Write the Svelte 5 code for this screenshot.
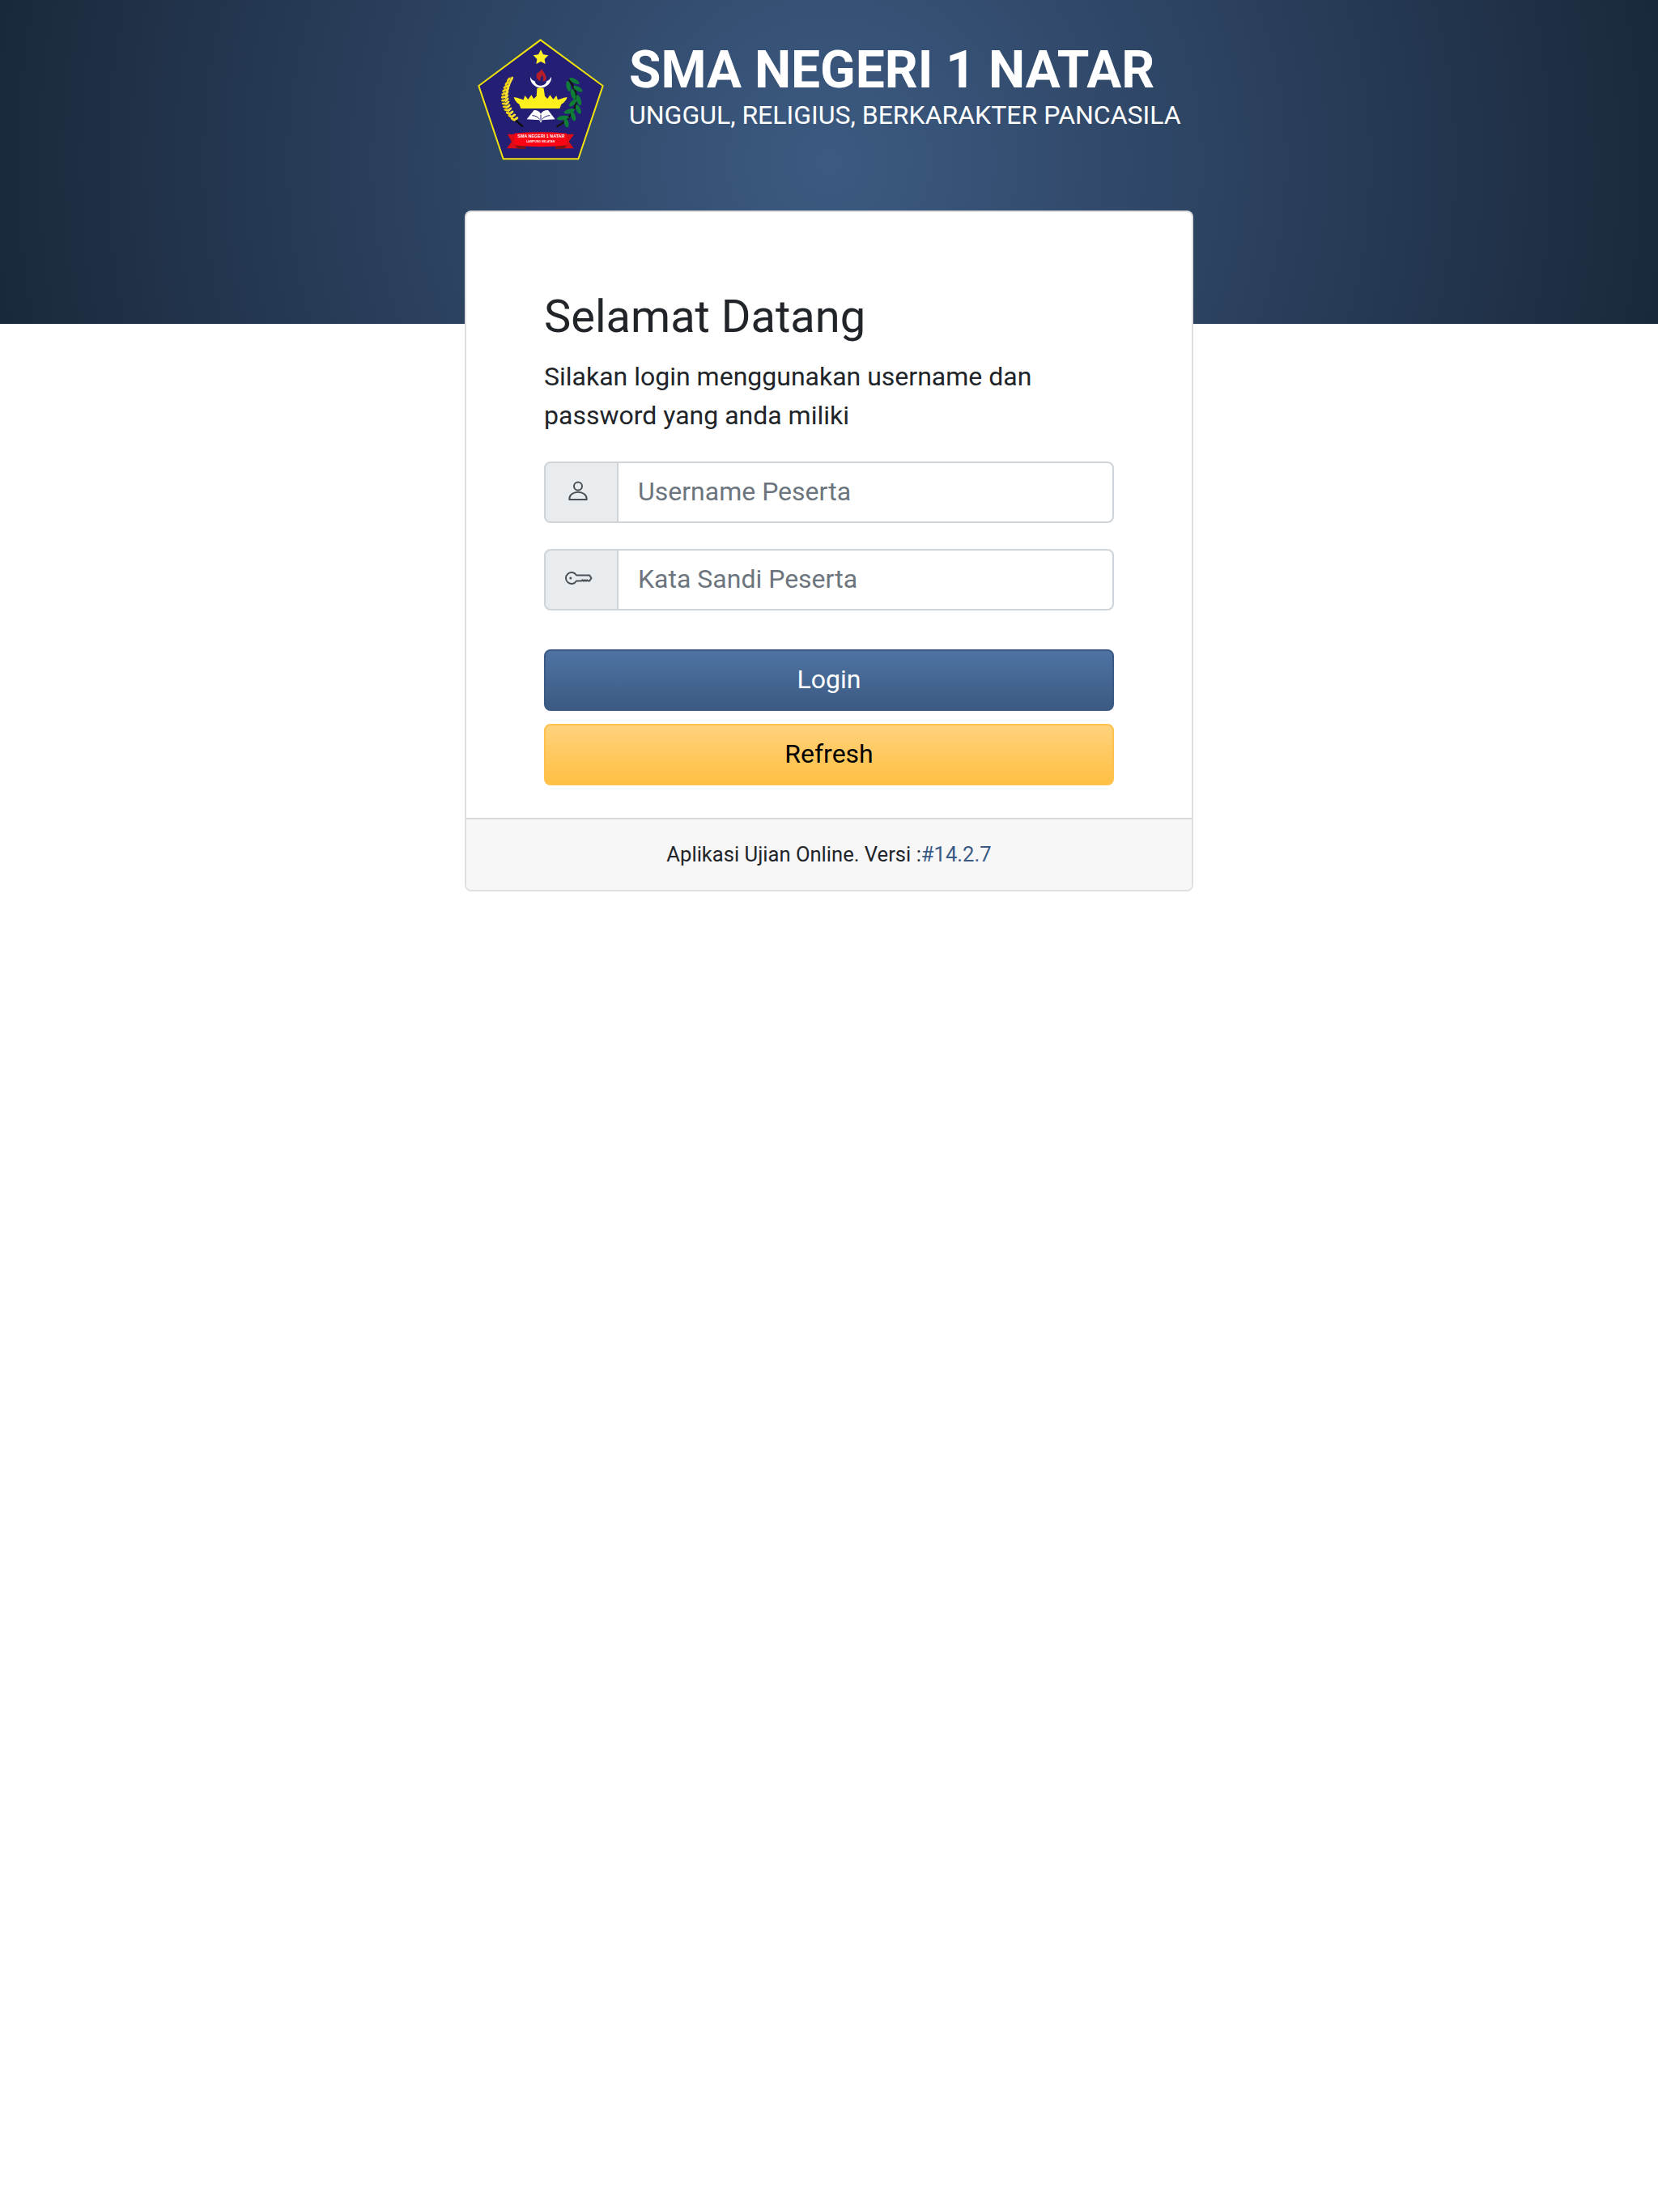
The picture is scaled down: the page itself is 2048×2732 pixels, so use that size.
<script>
  let username = $state('')
  let password = $state('')

  // branch leaves in logo coordinates: from x,y to x,y
  const leaves = [
    [400, 200, 437, 220], [393, 210, 400, 248], [415, 230, 448, 248], [408, 240, 420, 278],
    [428, 262, 441, 300], [400, 303, 427, 278], [426, 298, 440, 332], [380, 328, 420, 316],
    [408, 322, 420, 358], [354, 350, 398, 344], [385, 350, 393, 382]
  ].map(([x1, y1, x2, y2]) => ({
    cx: (x1 + x2) / 2,
    cy: (y1 + y2) / 2,
    rx: Math.hypot(x2 - x1, y2 - y1) / 2,
    angle: (Math.atan2(y2 - y1, x2 - x1) * 180) / Math.PI
  }))

  // rice grains along the stalk
  const grains = Array.from({ length: 13 }, (_, i) => {
    const t = i / 12
    const x = (1 - t) * (1 - t) * 180 + 2 * t * (1 - t) * 136 + t * t * 196
    const y = (1 - t) * (1 - t) * 205 + 2 * t * (1 - t) * 285 + t * t * 352
    return { x, y, t }
  })
</script>

<header class="top">
  <div class="brand">
    <svg class="logo" viewBox="0 0 600 540" width="200" height="180" aria-label="Logo SMA Negeri 1 Natar">
      <polygon points="293,58 524,228 433,499 155,499 64,228" fill="#241f75" stroke="#f2e20c" stroke-width="6" />
      <polygon points="294,94 303,112 322,115 308,129 311,147 294,138 277,147 280,129 266,115 285,112" fill="#fff02a" />
      <!-- flame -->
      <path d="M297 165c8 14 18 22 17 36-1 8-7 11-13 9 4-8 3-16-3-22-2 8-7 13-6 22-9-3-15-11-14-22 1-10 17-12 19-23z" fill="#b81f2b" />
      <!-- wings -->
      <path d="M255 195c-2 18 12 34 31 40h15c20-6 34-22 32-41-3 8-10 14-18 17 0 8-8 15-18 16h-8c-10-1-16-8-17-16-8-2-14-8-17-16z" fill="#fff" />
      <!-- siger crown -->
      <path d="M280 238l12-4 13 4 4 28 10 10 9-14 12 16 12-14 5 16 23-8 12-2c-4 14-14 22-22 26l-6 16H220l-6-16c-8-4-16-12-20-26l12 2 24 8 5-16 12 14 12-16 9 14 10-10z" fill="#fdf01c" />
      <!-- open book -->
      <path d="M242 352l27-34c13 0 21 6 25 14 4-8 13-14 27-14l26 34-48 3-5 10-5-10z" fill="#fff" />
      <path d="M294 335v22M262 338c12 0 22 6 28 14M328 338c-12 0-22 6-30 14" stroke="#241f75" stroke-width="3" fill="none" />
      <!-- rice stalk -->
      <path d="M228 380l-34-30" stroke="#0d0c0a" stroke-width="7" />
      {#each grains as g}
        <ellipse cx={g.x - 5} cy={g.y} rx="10" ry="4.500" fill="#f3d40e" transform="rotate({-55 + g.t * 90} {g.x - 5} {g.y})" />
        <ellipse cx={g.x + 6} cy={g.y - 2} rx="10" ry="4.500" fill="#f8e030" transform="rotate({-65 + g.t * 30} {g.x + 6} {g.y - 2})" />
      {/each}
      <!-- cotton branch -->
      <path d="M352 380c34-18 62-46 72-86 6-30-6-64-26-90" stroke="#15130c" stroke-width="7" fill="none" />
      {#each leaves as l}
        <ellipse cx={l.cx} cy={l.cy} rx={l.rx} ry="8" fill="#0f7d38" transform="rotate({l.angle} {l.cx} {l.cy})" />
      {/each}
      <!-- ribbon -->
      <polygon points="170,407 205,407 238,460 168,460 186,434" fill="#d90c17" />
      <polygon points="418,407 385,407 348,460 416,460 398,434" fill="#d90c17" />
      <polygon points="198,448 238,448 238,461 210,461" fill="#7a1414" />
      <polygon points="392,448 348,448 348,461 378,461" fill="#7a1414" />
      <path d="M196 404q100-8 194 0v44q-94 12-194 0z" fill="#fb0413" />
      <text x="295" y="421" class="ribbon" textLength="174">SMA NEGERI 1 NATAR</text>
      <text x="293" y="437" class="ribbon small" textLength="105">LAMPUNG SELATAN</text>
    </svg>
    <div class="titles">
      <h1>SMA NEGERI 1 NATAR</h1>
      <p>UNGGUL, RELIGIUS, BERKARAKTER PANCASILA</p>
    </div>
  </div>
</header>

<main class="card">
  <div class="card-body">
    <h3>Selamat Datang</h3>
    <p class="lead">Silakan login menggunakan username dan password yang anda miliki</p>
    <form onsubmit={(e) => e.preventDefault()}>
      <div class="input-group">
        <span class="addon">
          <svg width="40" height="40" viewBox="0 0 40 40" fill="none" stroke="#495057" stroke-width="2">
            <circle cx="16" cy="12.500" r="5" />
            <path d="M5.300 29v-.800c0-5 5-8.500 10.700-8.500s10.700 3.500 10.700 8.500v.800z" stroke-linejoin="round" />
          </svg>
        </span>
        <input type="text" placeholder="Username Peserta" bind:value={username} />
      </div>
      <div class="input-group">
        <span class="addon">
          <svg width="40" height="40" viewBox="0 0 40 40" fill="none" stroke="#495057" stroke-width="2">
            <path d="M14 14.400H30L32.500 18 30 21.600H28.500L27.300 20.400 26 21.600 24.500 20.400 23 21.600 21.500 20.400 20 21.600H14A7 7 0 1 1 14 14.400Z" stroke-linejoin="round" />
            <circle cx="6.800" cy="18" r="1.500" fill="#495057" stroke="none" />
          </svg>
        </span>
        <input type="password" placeholder="Kata Sandi Peserta" bind:value={password} />
      </div>
      <button class="btn primary" type="submit">Login</button>
      <button class="btn warning" type="button">Refresh</button>
    </form>
  </div>
  <footer class="card-footer">
    Aplikasi Ujian Online. Versi :<a href="#version">#14.2.7</a>
  </footer>
</main>

<style>
  :global(body) {
    background: #fff;
    font-family: Roboto, "Liberation Sans", sans-serif;
    font-size: 32px;
    line-height: 1.5;
    color: #212529;
  }

  .top {
    height: 400px;
    background: radial-gradient(circle at 50% 50%, #3c5a82 0%, #1a283b 100%);
  }

  .brand {
    width: 900px;
    margin: 0 auto;
    display: flex;
    align-items: flex-start;
    gap: 7px;
  }

  .logo {
    margin: 30px 0 0 -4px;
    flex: none;
  }

  .titles {
    padding-top: 49px;
    white-space: nowrap;
    color: #fff;
  }

  h1 {
    margin: 0 0 -3px;
    font-size: 64px;
    font-weight: 700;
    line-height: 1.2;
  }

  .titles p {
    margin: 0;
    font-size: 32px;
    line-height: 1.2;
  }

  .ribbon {
    fill: #fff;
    font-family: "Liberation Sans", sans-serif;
    font-size: 16px;
    font-weight: 700;
    text-anchor: middle;
  }

  .ribbon.small {
    font-size: 10px;
  }

  .card {
    position: relative;
    width: 900px;
    box-sizing: border-box;
    margin: -140px auto 0;
    background: #fff;
    border: 2px solid rgba(0, 0, 0, 0.125);
    border-radius: 8px;
  }

  .card-body {
    padding: 96px 96px 40px;
  }

  h3 {
    margin: 0 0 16px;
    font-size: 56px;
    font-weight: 400;
    line-height: 1.2;
  }

  .lead {
    margin: 0 0 33px;
  }

  .input-group {
    display: flex;
    height: 76px;
    margin-bottom: 32px;
  }

  .addon {
    flex: none;
    width: 92px;
    box-sizing: border-box;
    display: flex;
    align-items: center;
    justify-content: center;
    background: #e9ecef;
    border: 2px solid #ced4da;
    border-radius: 8px 0 0 8px;
  }

  input {
    flex: 1;
    min-width: 0;
    box-sizing: border-box;
    margin-left: -2px;
    padding: 10px 24px 12px;
    font: inherit;
    color: #495057;
    background: #fff;
    border: 2px solid #ced4da;
    border-radius: 0 8px 8px 0;
    outline: none;
  }

  input::placeholder {
    color: #6c757d;
  }

  .btn {
    display: block;
    width: 100%;
    height: 76px;
    padding: 10px 24px 12px;
    font: inherit;
    text-align: center;
    border-radius: 8px;
    border: 2px solid;
  }

  .primary {
    margin-top: 48px;
    color: #fff;
    background: linear-gradient(#4e73a3, #3c5a82);
    border-color: #3a5a85;
  }

  .warning {
    margin-top: 16px;
    color: #000;
    background: linear-gradient(#ffd27c, #ffc043);
    border-color: #ffc14d;
  }

  .card-footer {
    padding: 24px;
    font-size: 25.6px;
    text-align: center;
    background: #f7f7f7;
    border-top: 2px solid rgba(0, 0, 0, 0.125);
    border-radius: 0 0 6px 6px;
  }

  .card-footer a {
    color: #3a5a85;
    text-decoration: none;
  }
</style>
